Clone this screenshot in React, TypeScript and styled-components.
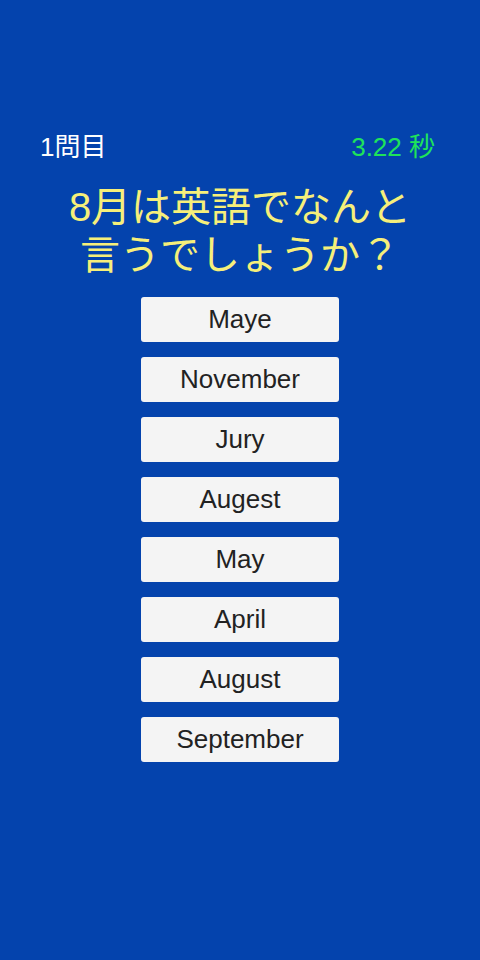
import * as React from "react";
import styled, {createGlobalStyle} from "styled-components";

const GlobalStyle = createGlobalStyle`
    html, body {
        margin: 0;
        padding: 0;
        background: #0443ad;
    }
    body {
        font-family: "Liberation Sans", "Noto Sans CJK JP", sans-serif;
    }
`;

const Screen = styled.div`
    width: 480px;
    height: 960px;
    background: #0443ad;
    display: flex;
    flex-direction: column;
    align-items: center;
    box-sizing: border-box;
    padding-top: 131px;
`;

const StatusRow = styled.div`
    width: 100%;
    box-sizing: border-box;
    padding: 0 45px 0 40px;
    display: flex;
    justify-content: space-between;
    align-items: center;
    height: 32px;
`;

const Label = styled.span<{ $color: string }>`
    font-size: 26px;
    color: ${props => props.$color};
    line-height: 32px;
`;

const Question = styled.div`
    margin-top: 20px;
    color: #f6ef7a;
    font-size: 40px;
    line-height: 48px;
    text-align: center;
`;

const Choices = styled.div`
    margin-top: 18px;
    display: flex;
    flex-direction: column;
    gap: 15px;
`;

const Choice = styled.button`
    width: 198px;
    height: 45px;
    border: none;
    border-radius: 3px;
    background: #f4f4f4;
    color: #222;
    font-family: "Liberation Sans", "Noto Sans CJK JP", sans-serif;
    font-size: 26px;
    padding: 0;
    display: flex;
    align-items: center;
    justify-content: center;
`;

const answers = ["Maye", "November", "Jury", "Augest", "May", "April", "August", "September"];

export default function App() {
    return (
        <>
            <GlobalStyle/>
            <Screen>
                <StatusRow>
                    <Label $color={"#ffffff"}>1問目</Label>
                    <Label $color={"#1fe35a"}>3.22 秒</Label>
                </StatusRow>
                <Question>
                    8月は英語でなんと<br/>言うでしょうか？
                </Question>
                <Choices>
                    {answers.map(a => <Choice key={a}>{a}</Choice>)}
                </Choices>
            </Screen>
        </>
    );
}
